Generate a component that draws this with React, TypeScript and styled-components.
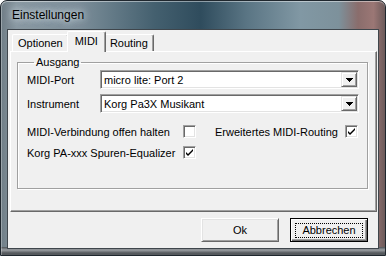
import styled, { createGlobalStyle } from 'styled-components';

const GlobalStyle = createGlobalStyle`
  html, body {
    margin: 0;
    padding: 0;
    background: #fff;
  }
  body {
    font-family: "Liberation Sans", Arial, sans-serif;
    font-size: 11px;
    color: #000;
  }
`;

const Window = styled.div`
  box-sizing: border-box;
  width: 386px;
  height: 256px;
  display: flex;
  flex-direction: column;
  padding: 0 6px 6px 6px;
  border: 1px solid #1f272e;
  border-radius: 7px 7px 0 0;
  background:
    linear-gradient(to bottom, rgba(0, 0, 0, 0) 246px, #4e5357 246px, #9a9ea2 249px, #55595d 252px),
    linear-gradient(90deg, #6f7d86 0%, #8a99a2 4%, #7d8f9a 20%, #44606f 40%, #2f4c5d 52%, #5a7584 64%, #8198a4 78%, #7d919b 88%, #8a6d6c 93%, #9b7775 97%, #6c5a5a 100%);
  box-shadow: inset 0 1px 0 rgba(255, 255, 255, 0.45), inset 1px 0 0 rgba(255, 255, 255, 0.3);
`;

const TitleBar = styled.div`
  height: 28px;
  display: flex;
  align-items: center;
  padding-left: 5px;
`;

const TitleText = styled.span`
  font-size: 12px;
  color: #000;
  text-shadow: 0 0 6px rgba(230, 240, 245, 0.9), 0 0 10px rgba(230, 240, 245, 0.7);
`;

const Client = styled.div`
  flex: 1;
  display: flex;
  flex-direction: column;
  padding: 1px 1px 0 2px;
  background: #f0f0f0;
  border: 1px solid #3f464c;
`;

const TabStrip = styled.div`
  display: flex;
  align-items: flex-end;
  height: 20px;
  padding-left: 2px;
  position: relative;
  z-index: 1;
`;

const Tab = styled.div<{ $active?: boolean }>`
  box-sizing: border-box;
  display: flex;
  align-items: center;
  height: ${(p) => (p.$active ? '21px' : '17px')};
  margin: ${(p) => (p.$active ? '0 -2px -1px -2px' : '0')};
  padding: ${(p) => (p.$active ? '0 7px 2px 7px' : '0 5px')};
  background: #f0f0f0;
  border-top: 1px solid #fff;
  border-left: 1px solid #fff;
  border-right: 1px solid #696969;
  border-radius: 2px 2px 0 0;
  box-shadow: inset -1px 0 0 #a0a0a0;
  position: relative;
  z-index: ${(p) => (p.$active ? 2 : 0)};
`;

const TabPanel = styled.div`
  box-sizing: border-box;
  height: 161px;
  padding: 4px 8px 0 6px;
  border-top: 1px solid #fff;
  border-left: 1px solid #fff;
  border-right: 1px solid #696969;
  border-bottom: 1px solid #696969;
  box-shadow: inset -1px -1px 0 #a0a0a0;
`;

const Group = styled.fieldset`
  box-sizing: border-box;
  margin: 0;
  height: 133px;
  padding: 1px 8px 0 9px;
  border: 1px solid #a0a0a0;
  box-shadow: inset 1px 1px 0 #fff, 1px 1px 0 #fff;
  display: flex;
  flex-direction: column;
`;

const Legend = styled.legend`
  padding: 0 2px;
  margin-left: 7px;
  line-height: 13px;
`;

const FieldRow = styled.div`
  display: flex;
  align-items: center;
  height: 19px;
  margin-bottom: 5px;
`;

const FieldLabel = styled.span`
  width: 73px;
  flex-shrink: 0;
`;

const Combo = styled.div`
  box-sizing: border-box;
  flex: 1;
  height: 19px;
  display: flex;
  align-items: stretch;
  background: #fff;
  border-top: 1px solid #a0a0a0;
  border-left: 1px solid #a0a0a0;
  border-right: 1px solid #fff;
  border-bottom: 1px solid #fff;
  box-shadow: inset 1px 1px 0 #696969, inset -1px -1px 0 #e3e3e3;
  padding: 1px;
`;

const ComboText = styled.span`
  flex: 1;
  display: flex;
  align-items: center;
  padding-left: 2px;
`;

const ComboButton = styled.div`
  box-sizing: border-box;
  width: 16px;
  display: flex;
  align-items: center;
  justify-content: center;
  background: #f0f0f0;
  border-top: 1px solid #e3e3e3;
  border-left: 1px solid #e3e3e3;
  border-right: 1px solid #696969;
  border-bottom: 1px solid #696969;
  box-shadow: inset 1px 1px 0 #fff, inset -1px -1px 0 #a0a0a0;
`;

const CheckRow = styled.div<{ $top?: number }>`
  display: flex;
  align-items: center;
  gap: 19px;
  height: 13px;
  margin-top: ${(p) => p.$top ?? 0}px;
`;

const CheckItem = styled.label`
  display: flex;
  align-items: center;
`;

const CheckLabel = styled.span<{ $width: number }>`
  width: ${(p) => p.$width}px;
  white-space: nowrap;
`;

const Box = styled.span`
  box-sizing: border-box;
  width: 13px;
  height: 13px;
  display: flex;
  align-items: center;
  justify-content: center;
  background: #fff;
  border-top: 1px solid #a0a0a0;
  border-left: 1px solid #a0a0a0;
  border-right: 1px solid #fff;
  border-bottom: 1px solid #fff;
  box-shadow: inset 1px 1px 0 #696969, inset -1px -1px 0 #e3e3e3;
`;

const ButtonRow = styled.div`
  display: flex;
  justify-content: flex-end;
  gap: 11px;
  padding: 6px 9px 0 0;
`;

const Button = styled.div<{ $default?: boolean }>`
  box-sizing: border-box;
  width: 78px;
  height: 24px;
  display: flex;
  align-items: center;
  justify-content: center;
  background: #f0f0f0;
  border-top: 1px solid ${(p) => (p.$default ? '#000' : '#fff')};
  border-left: 1px solid ${(p) => (p.$default ? '#000' : '#fff')};
  border-right: 1px solid ${(p) => (p.$default ? '#000' : '#696969')};
  border-bottom: 1px solid ${(p) => (p.$default ? '#000' : '#696969')};
  box-shadow: ${(p) =>
    p.$default
      ? 'inset 1px 1px 0 #fff, inset -1px -1px 0 #696969, inset -2px -2px 0 #a0a0a0'
      : 'inset 1px 1px 0 #e3e3e3, inset -1px -1px 0 #a0a0a0'};
`;

const FocusRect = styled.span`
  box-sizing: border-box;
  width: 68px;
  height: 15px;
  display: flex;
  align-items: center;
  justify-content: center;
  border: 1px dotted #000;
`;

const Arrow = () => (
  <svg width="7" height="4" viewBox="0 0 7 4">
    <path d="M0 0h7L3.5 4z" fill="#000" shapeRendering="crispEdges" />
  </svg>
);

const Check = () => (
  <svg width="7" height="7" viewBox="0 0 7 7">
    <path d="M0 3l2 2 5-5v2L2 7 0 5z" fill="#000" />
  </svg>
);

const Checkbox = ({ checked }: { checked?: boolean }) => <Box>{checked && <Check />}</Box>;

const App = () => {
  return (
    <>
      <GlobalStyle />
      <Window>
        <TitleBar>
          <TitleText>Einstellungen</TitleText>
        </TitleBar>
        <Client>
          <TabStrip>
            <Tab>Optionen</Tab>
            <Tab $active>MIDI</Tab>
            <Tab>Routing</Tab>
          </TabStrip>
          <TabPanel>
            <Group>
              <Legend>Ausgang</Legend>
              <FieldRow>
                <FieldLabel>MIDI-Port</FieldLabel>
                <Combo>
                  <ComboText>micro lite: Port 2</ComboText>
                  <ComboButton>
                    <Arrow />
                  </ComboButton>
                </Combo>
              </FieldRow>
              <FieldRow>
                <FieldLabel>Instrument</FieldLabel>
                <Combo>
                  <ComboText>Korg Pa3X Musikant</ComboText>
                  <ComboButton>
                    <Arrow />
                  </ComboButton>
                </Combo>
              </FieldRow>
              <CheckRow $top={7}>
                <CheckItem>
                  <CheckLabel $width={156}>MIDI-Verbindung offen halten</CheckLabel>
                  <Checkbox />
                </CheckItem>
                <CheckItem>
                  <CheckLabel $width={130}>Erweitertes MIDI-Routing</CheckLabel>
                  <Checkbox checked />
                </CheckItem>
              </CheckRow>
              <CheckRow $top={8}>
                <CheckItem>
                  <CheckLabel $width={156}>Korg PA-xxx Spuren-Equalizer</CheckLabel>
                  <Checkbox checked />
                </CheckItem>
              </CheckRow>
            </Group>
          </TabPanel>
          <ButtonRow>
            <Button>Ok</Button>
            <Button $default>
              <FocusRect>Abbrechen</FocusRect>
            </Button>
          </ButtonRow>
        </Client>
      </Window>
    </>
  );
};

export default App;
